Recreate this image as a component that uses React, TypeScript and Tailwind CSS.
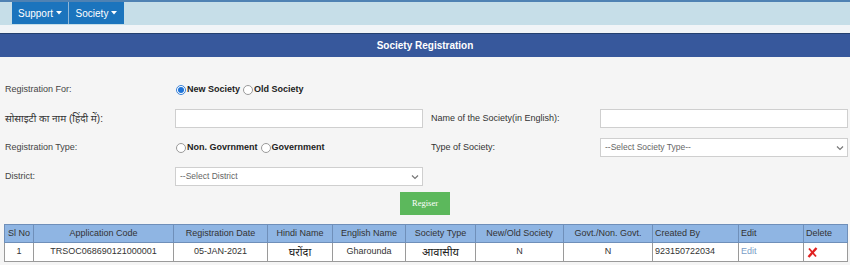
import React from "react";

const font = { fontFamily: '"Liberation Sans", "Noto Sans", "Noto Sans Devanagari", sans-serif' };

function Radio({ checked, label }: { checked?: boolean; label: string }) {
  return (
    <span className="flex items-center mr-[3px]">
      <span
        className={
          "w-[10px] h-[10px] rounded-full border flex items-center justify-center bg-white " +
          (checked ? "border-[#3b82d6]" : "border-[#9a9a9a]")
        }
      >
        {checked && <span className="w-[6px] h-[6px] rounded-full bg-[#1e73d8]" />}
      </span>
      <span className="ml-[1px] font-bold text-[9px] text-[#222]">{label}</span>
    </span>
  );
}

function Chevron() {
  return (
    <svg width="8" height="6" viewBox="0 0 8 6" className="mr-[3px]">
      <path d="M1 1.5 L4 4.5 L7 1.5" fill="none" stroke="#777" strokeWidth="1.2" />
    </svg>
  );
}

function Select({ text }: { text: string }) {
  return (
    <div className="w-[248px] h-[19px] bg-white border border-[#cfcfcf] flex items-center justify-between pl-[4px]">
      <span className="text-[8.5px] text-[#666]">{text}</span>
      <Chevron />
    </div>
  );
}

function Input() {
  return <div className="w-[248px] h-[19px] bg-white border border-[#cfcfcf]" />;
}

const cols = [
  { h: "Sl No", w: 29, v: "1", align: "center" },
  { h: "Application Code", w: 140, v: "TRSOC068690121000001", align: "center" },
  { h: "Registration Date", w: 94, v: "05-JAN-2021", align: "center" },
  { h: "Hindi Name", w: 65, v: "घरोंदा", align: "center", hindi: true },
  { h: "English Name", w: 73, v: "Gharounda", align: "center" },
  { h: "Society Type", w: 70, v: "आवासीय", align: "center", hindi: true },
  { h: "New/Old Society", w: 88, v: "N", align: "center" },
  { h: "Govt./Non. Govt.", w: 89, v: "N", align: "center" },
  { h: "Created By", w: 86, v: "923150722034", align: "left" },
  { h: "Edit", w: 65, v: "Edit", align: "left", link: true },
  { h: "Delete", w: 44, v: "", align: "left", del: true },
];

export default function App() {
  return (
    <div className="w-[850px] h-[265px] bg-[#f5f5f5] overflow-hidden" style={font}>
      {/* nav */}
      <div className="h-[25px] bg-[#c6dee8] border-t-[2px] border-[#4f82b3] flex pl-[12px]">
        <div className="h-[22px] w-[56px] bg-[#1b74bd] text-white text-[10px] flex items-center justify-center gap-[3px]">
          Support
          <svg width="6" height="4" viewBox="0 0 6 4"><path d="M0 0 L6 0 L3 3.5Z" fill="white" /></svg>
        </div>
        <div className="h-[22px] w-[1px] bg-[#8fb7d8]" />
        <div className="h-[22px] w-[55px] bg-[#1b74bd] text-white text-[10px] flex items-center justify-center gap-[3px]">
          Society
          <svg width="6" height="4" viewBox="0 0 6 4"><path d="M0 0 L6 0 L3 3.5Z" fill="white" /></svg>
        </div>
      </div>
      <div className="h-[8px] bg-[#f1f4f7]" />
      {/* header */}
      <div className="h-[24px] bg-[#37589c] border-t border-[#24406f] flex items-center justify-center text-white font-bold text-[10px]">
        Society Registration
      </div>

      {/* form */}
      <div className="pt-[18px] pl-[5px]">
        <div className="h-[29px] flex items-center">
          <div className="w-[170px] text-[9px] text-[#444]">Registration For:</div>
          <div className="flex items-center pl-[1px]">
            <Radio checked label="New Society" />
            <Radio label="Old Society" />
          </div>
        </div>
        <div className="h-[29px] flex items-center">
          <div className="w-[170px] text-[10px] text-[#333]">सोसाइटी का नाम (हिंदी में):</div>
          <Input />
          <div className="w-[177px] pl-[8px] text-[9px] text-[#333]">Name of the Society(in English):</div>
          <Input />
        </div>
        <div className="h-[29px] flex items-center">
          <div className="w-[170px] text-[9px] text-[#444]">Registration Type:</div>
          <div className="w-[248px] flex items-center pl-[1px]">
            <Radio label="Non. Govrnment" />
            <Radio label="Government" />
          </div>
          <div className="w-[177px] pl-[8px] text-[9px] text-[#333]">Type of Society:</div>
          <Select text="--Select Society Type--" />
        </div>
        <div className="h-[29px] flex items-center">
          <div className="w-[170px] text-[9px] text-[#444]">District:</div>
          <Select text="--Select District" />
        </div>
      </div>

      <div className="flex justify-center mt-[1px]">
        <div className="w-[50px] h-[23px] bg-[#5cb85c] text-white text-[8.5px] flex items-center justify-center" style={{ fontFamily: '"Liberation Serif", serif' }}>
          Regiser
        </div>
      </div>

      {/* table */}
      <div className="mt-[9px] ml-[4px]">
        <table className="border-collapse table-fixed w-[843px] text-[9px]">
          <colgroup>
            {cols.map((c, i) => (
              <col key={i} style={{ width: c.w }} />
            ))}
          </colgroup>
          <thead>
            <tr className="h-[18px] bg-[#8fb5e3]">
              {cols.map((c, i) => (
                <th
                  key={i}
                  className={
                    "border border-[#6f8fb9] font-normal text-[#333] px-[2px] " +
                    (c.align === "left" ? "text-left" : "text-center")
                  }
                >
                  {c.h}
                </th>
              ))}
            </tr>
          </thead>
          <tbody>
            <tr className="h-[19px] bg-white">
              {cols.map((c, i) => (
                <td
                  key={i}
                  className={
                    "border border-[#9a9a9a] px-[2px] " +
                    (c.align === "left" ? "text-left " : "text-center ") +
                    (c.hindi ? "text-[11px] text-[#222]" : c.link ? "text-[#7a9cc6]" : "text-[#333]")
                  }
                >
                  {c.del ? (
                    <svg width="11" height="11" viewBox="0 0 11 11" className="ml-[1px] block">
                      <path d="M2 1.5 L9 9.5" stroke="#e02020" strokeWidth="1.8" />
                      <path d="M9.5 1 L1.5 10" stroke="#e02020" strokeWidth="2.4" />
                    </svg>
                  ) : (
                    c.v
                  )}
                </td>
              ))}
            </tr>
          </tbody>
        </table>
      </div>
    </div>
  );
}
